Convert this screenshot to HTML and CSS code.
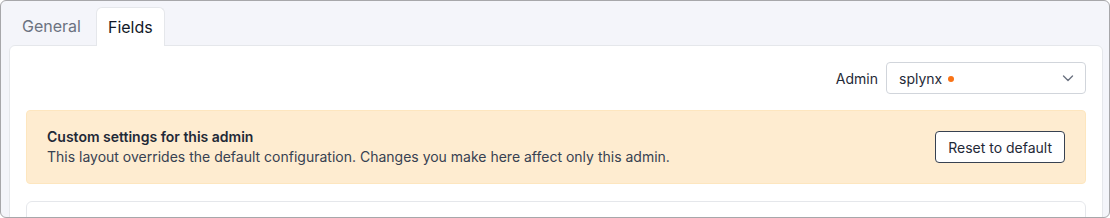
FILE: index.html
```html
<!DOCTYPE html>
<html lang="en">
  <head>
    <meta charset="UTF-8" />
    <title>Fields layout</title>
    <link rel="stylesheet" href="styles.css">
  </head>
  <body>
    <div class="frame">
      <!-- Tabs -->
      <div class="tabs">
        <span class="tab">General</span>
        <span class="tab active">Fields</span>
      </div>

      <div class="card">
        <div class="toolbar">
          <label class="toolbar-label" for="adminSelect">Admin</label>
          <div class="select" id="adminSelect">
            <span class="select-value">splynx <span class="dot"></span></span>
            <svg class="chevron" width="14" height="14" viewBox="0 0 14 14">
              <path d="M2.5 5 L7 9.5 L11.5 5" fill="none" stroke="#6b7280" stroke-width="1.4" stroke-linecap="round" stroke-linejoin="round" />
            </svg>
          </div>
        </div>

        <!-- Custom settings notice -->
        <div class="notice">
          <div class="notice-text">
            <div class="notice-title">Custom settings for this admin</div>
            <div class="notice-body">This layout overrides the default configuration. Changes you make here affect only this admin.</div>
          </div>
          <button class="btn-outline" type="button">Reset to default</button>
        </div>

        <div class="fields-box"></div>
      </div>
    </div>
  </body>
</html>
```

FILE: styles.css
```css
body {
  margin: 0;
  font-family: Inter, "Noto Sans", Arial, sans-serif;
  background: #fff;
}

.frame {
  box-sizing: border-box;
  width: 1110px;
  height: 218px;
  border: 1px solid #a7a7aa;
  border-radius: 6px;
  background: #f4f5fa;
  padding: 5px 6px 0 8px;
  overflow: hidden;
}

.tabs {
  display: flex;
  align-items: flex-end;
  gap: 2px;
}

.tab {
  display: inline-block;
  padding: 9px 12px;
  font-size: 16px;
  line-height: 20px;
  color: #6b7280;
  border: 1px solid transparent;
  border-bottom: none;
  border-radius: 6px 6px 0 0;
}

.tab.active {
  background: #fff;
  color: #111827;
  border-color: #e5e7eb;
  padding: 9px 11px;
  margin-bottom: -1px;
  position: relative;
  z-index: 1;
}

.card {
  background: #fff;
  border: 1px solid #e5e7eb;
  border-radius: 6px;
  padding: 16px 16px 0;
  height: 200px;
  box-sizing: border-box;
}

.toolbar {
  display: flex;
  justify-content: flex-end;
  align-items: center;
  gap: 8px;
  margin-bottom: 16px;
}

.toolbar-label {
  font-size: 14px;
  color: #1f2937;
}

.select {
  box-sizing: border-box;
  width: 200px;
  height: 32px;
  border: 1px solid #d1d5db;
  border-radius: 4px;
  padding: 0 10px 0 12px;
  display: flex;
  align-items: center;
  justify-content: space-between;
}

.select-value {
  font-size: 14px;
  color: #1f2937;
  display: flex;
  align-items: center;
  gap: 6px;
}

.dot {
  width: 6px;
  height: 6px;
  border-radius: 50%;
  background: #f97316;
  margin-top: 1px;
}

.notice {
  display: flex;
  align-items: center;
  justify-content: space-between;
  background: #feecd0;
  border: 1px solid #fde6bf;
  border-radius: 4px;
  padding: 16px 20px;
}

.notice-title {
  font-size: 14px;
  font-weight: 600;
  line-height: 20px;
  color: #1f2937;
}

.notice-body {
  font-size: 14px;
  line-height: 20px;
  color: #374151;
}

.btn-outline {
  font-family: inherit;
  font-size: 14px;
  color: #1f2937;
  background: #fff;
  border: 1px solid #374151;
  border-radius: 4px;
  height: 32px;
  padding: 0 12px;
  cursor: pointer;
}

.fields-box {
  margin-top: 17px;
  height: 60px;
  border: 1px solid #e5e7eb;
  border-radius: 6px;
}
```
